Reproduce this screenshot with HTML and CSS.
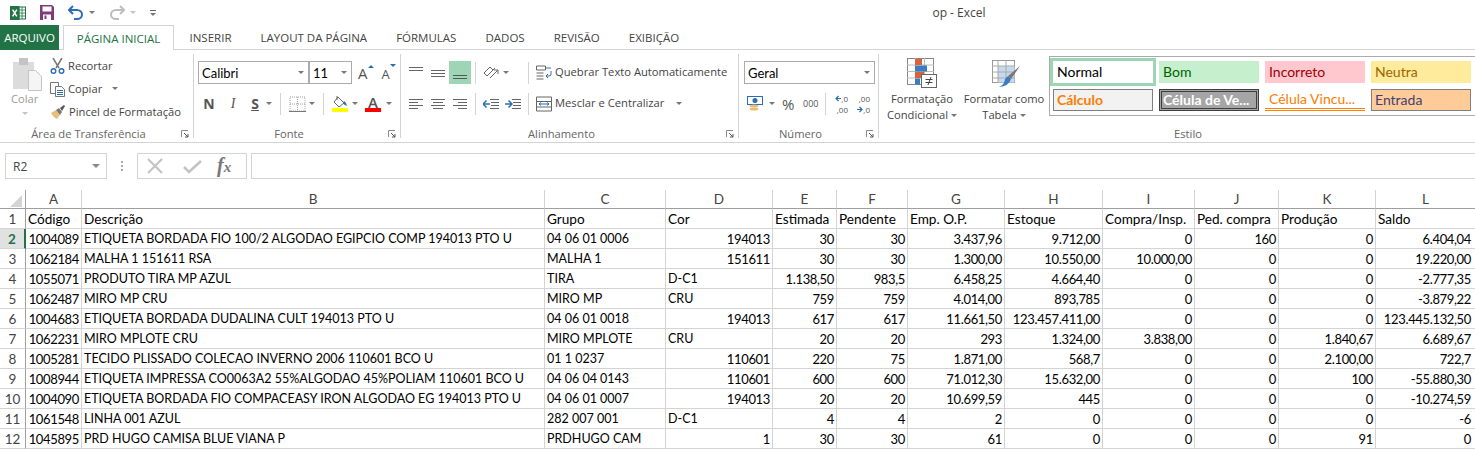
FILE: index.html
```html
<!DOCTYPE html>
<html lang="pt-BR">
<head>
<meta charset="utf-8">
<title>op - Excel</title>
<link rel="stylesheet" href="styles.css">
</head>
<body>
<div class="app">
  <header class="titlebar">
    <div class="qat">
      <svg class="i-excel" width="16" height="16" viewBox="0 0 16 16"><rect x="6" y="2" width="9.5" height="12" fill="#fff" stroke="#217346"/><path d="M9 2v12M12 2v12M6 5h9M6 8h9M6 11h9" stroke="#217346" stroke-width=".8"/><rect y="1" width="9.5" height="14" fill="#217346"/><path d="M2.6 4.6l4.2 6.8M6.8 4.6l-4.2 6.8" stroke="#fff" stroke-width="1.5"/></svg>
      <svg class="i-save" width="14" height="15" viewBox="0 0 14 15"><path d="M0 0h12l2 2v13H0z" fill="#80397b"/><rect x="2.5" y="1.5" width="9" height="5" fill="#fff"/><rect x="3" y="9.5" width="8" height="5.5" fill="#fff"/><rect x="4.5" y="10.5" width="2" height="3.5" fill="#80397b"/></svg>
      <svg class="i-undo" width="16" height="15" viewBox="0 0 16 15"><path d="M5 1L1 5l4 4" fill="none" stroke="#2b6fb3" stroke-width="2"/><path d="M2 5h7a5 4.500 0 0 1 0 9H6" fill="none" stroke="#2b6fb3" stroke-width="2"/></svg>
      <span class="caret c-undo"></span>
      <svg class="i-redo" width="16" height="15" viewBox="0 0 16 15"><path d="M11 1l4 4-4 4" fill="none" stroke="#bdbdbd" stroke-width="2"/><path d="M14 5H7a5 4.500 0 0 0 0 9h3" fill="none" stroke="#bdbdbd" stroke-width="2"/></svg>
      <span class="caret c-redo pale"></span>
      <span class="qat-more"><span class="qat-bar"></span><span class="caret"></span></span>
    </div>
    <div class="doc-title">op - Excel</div>
  </header>

  <nav class="tabs">
    <span class="tab-file">ARQUIVO</span>
    <span class="tab tab-active">PÁGINA INICIAL</span>
    <span class="tab">INSERIR</span>
    <span class="tab">LAYOUT DA PÁGINA</span>
    <span class="tab">FÓRMULAS</span>
    <span class="tab">DADOS</span>
    <span class="tab">REVISÃO</span>
    <span class="tab">EXIBIÇÃO</span>
  </nav>

  <section class="ribbon">
    <div class="group g-clip">
      <div class="group-body clip-body">
        <div class="paste">
          <svg width="29" height="33" viewBox="0 0 29 33"><rect x="0" y="4" width="21" height="27" fill="#dcdcdc"/><rect x="6" y="0" width="9" height="7" fill="#c4c4c4"/><path d="M15.500 12.500h7l6 6v14h-13z" fill="#f5f5f5" stroke="#c4c4c4"/></svg>
          <span class="paste-label">Colar</span>
          <span class="caret pale"></span>
        </div>
        <div class="clip-list">
          <div class="clip-item">
            <svg width="15" height="16" viewBox="0 0 15 16"><path d="M3 0l6 10M12 0L6 10" stroke="#777" stroke-width="1.500"/><circle cx="3.500" cy="13" r="2.300" fill="none" stroke="#2b6fb3" stroke-width="1.400"/><circle cx="11.500" cy="13" r="2.300" fill="none" stroke="#2b6fb3" stroke-width="1.400"/></svg>
            <span>Recortar</span>
          </div>
          <div class="clip-item">
            <svg width="15" height="16" viewBox="0 0 15 16"><path d="M.5 1.500h8v11h-8z" fill="#fff" stroke="#777"/><path d="M5.500 5.500h6l3 3v7h-9z" fill="#fff" stroke="#777"/><path d="M7 9.500h6M7 11.500h6M7 13.500h6" stroke="#2b6fb3"/></svg>
            <span>Copiar</span><span class="caret c-copy"></span>
          </div>
          <div class="clip-item">
            <svg width="16" height="16" viewBox="0 0 16 16"><path d="M1 9l5-3 4 5-3 4q-3-1-6-6z" fill="#e9bf78"/><path d="M6 6l3-2 3 4-2 3z" fill="#777"/><path d="M10 4l4-3 1 1-3 5z" fill="#555"/></svg>
            <span>Pincel de Formatação</span>
          </div>
        </div>
      </div>
      <div class="group-foot"><span class="group-label">Área de Transferência</span><span class="launcher"><svg width="8" height="8" viewBox="0 0 8 8"><path d="M.5 7V.5H7" fill="none" stroke="#8a8a8a"/><path d="M3 3l4 4M7 4v3H4" fill="none" stroke="#555"/></svg></span></div>
    </div>

    <div class="group g-font">
      <div class="group-body rows">
        <div class="row">
          <div class="combo combo-font"><span>Calibri</span><span class="caret"></span></div>
          <div class="combo combo-size"><span>11</span><span class="caret"></span></div>
          <span class="grow-a">A<span class="tri-up"></span></span>
          <span class="shrink-a">A<span class="tri-down"></span></span>
        </div>
        <div class="row row-tools">
          <span class="fmt fmt-n">N</span>
          <span class="fmt fmt-i">I</span>
          <span class="fmt fmt-s">S</span>
          <span class="caret c-s"></span>
          <span class="vsep vs-a"></span>
          <svg class="i-borders" width="17" height="16" viewBox="0 0 17 16"><path d="M1 1h15v14H1zM8.500 1v14M1 8h15" fill="none" stroke="#a0a0a0" stroke-dasharray="1 1"/><path d="M0 15.500h17" stroke="#777"/></svg>
          <span class="caret c-bd"></span>
          <span class="vsep vs-b"></span>
          <span class="fill-ic"><svg width="16" height="12" viewBox="0 0 16 12"><path d="M6 1l6 6-5 4-5-5z" fill="#fff" stroke="#666"/><path d="M5 0v4" stroke="#666"/><path d="M12 5q3 2 3 5-3-1-4-3z" fill="#2b6fb3"/></svg><span class="bar bar-y"></span></span>
          <span class="caret c-fill"></span>
          <span class="color-a"><span class="color-a-l">A</span><span class="bar bar-r"></span></span>
          <span class="caret c-col"></span>
        </div>
      </div>
      <div class="group-foot"><span class="group-label">Fonte</span><span class="launcher"><svg width="8" height="8" viewBox="0 0 8 8"><path d="M.5 7V.5H7" fill="none" stroke="#8a8a8a"/><path d="M3 3l4 4M7 4v3H4" fill="none" stroke="#555"/></svg></span></div>
    </div>

    <div class="group g-align">
      <div class="group-body rows">
        <div class="row">
          <span class="al"><svg width="14" height="14" viewBox="0 0 14 14"><path d="M0 1.500h14M0 4.500h14" stroke="#666"/></svg></span>
          <span class="al"><svg width="14" height="14" viewBox="0 0 14 14"><path d="M0 4.500h14M0 7.500h14M0 10.500h14" stroke="#666"/></svg></span>
          <span class="al al-on"><svg width="14" height="14" viewBox="0 0 14 14"><path d="M0 9.500h14M0 12.500h14" stroke="#555"/></svg></span>
          <span class="vsep vs-c"></span>
          <svg class="i-orient" width="17" height="15" viewBox="0 0 17 15"><path d="M1 8l6-6 3 3-6 6zM4 11l8-8" fill="none" stroke="#666"/><path d="M7 13l8-8M15 5v4M15 5h-4" fill="none" stroke="#666"/></svg>
          <span class="caret c-or"></span>
          <span class="vsep vs-d"></span>
          <span class="wide-btn"><svg width="16" height="16" viewBox="0 0 16 16"><path d="M.5 1h9v4h-9zM.5 8h7M.5 11h7M.5 14h7" fill="none" stroke="#666"/><path d="M10 3h5M15 6v3a2 2 0 0 1-2 2h-3M12 9l-2 2 2 2" fill="none" stroke="#2b6fb3"/></svg><span class="wide-text">Quebrar Texto Automaticamente</span></span>
        </div>
        <div class="row">
          <span class="al"><svg width="14" height="14" viewBox="0 0 14 14"><path d="M0 2.500h14M0 5.500h9M0 8.500h14M0 11.500h9" stroke="#666"/></svg></span>
          <span class="al"><svg width="14" height="14" viewBox="0 0 14 14"><path d="M0 2.500h14M2 5.500h10M0 8.500h14M2 11.500h10" stroke="#666"/></svg></span>
          <span class="al"><svg width="14" height="14" viewBox="0 0 14 14"><path d="M0 2.500h14M5 5.500h9M0 8.500h14M5 11.500h9" stroke="#666"/></svg></span>
          <span class="vsep vs-c"></span>
          <svg class="i-ind" width="16" height="14" viewBox="0 0 16 14"><path d="M7 2.500h9M8 5.500h8M8 8.500h8M7 11.500h9" stroke="#666"/><path d="M0 7h7M3.500 3.500L0 7l3.500 3.500" fill="none" stroke="#2b6fb3" stroke-width="1.500"/></svg>
          <svg class="i-ind2" width="16" height="14" viewBox="0 0 16 14"><path d="M7 2.500h9M8 5.500h8M8 8.500h8M7 11.500h9" stroke="#666"/><path d="M0 7h7M3.500 3.500L7 7l-3.500 3.500" fill="none" stroke="#2b6fb3" stroke-width="1.500"/></svg>
          <span class="vsep vs-e"></span>
          <span class="wide-btn"><svg width="16" height="16" viewBox="0 0 16 16"><path d="M.5 1h15v14H.5zM.5 5.500h15M.5 11h15" fill="none" stroke="#666"/><path d="M3 8h10M5 6.500L3 8l2 1.500M11 6.500L13 8l-2 1.500" fill="none" stroke="#2b6fb3"/></svg><span class="wide-text">Mesclar e Centralizar</span><span class="caret c-merge"></span></span>
        </div>
      </div>
      <div class="group-foot"><span class="group-label">Alinhamento</span><span class="launcher"><svg width="8" height="8" viewBox="0 0 8 8"><path d="M.5 7V.5H7" fill="none" stroke="#8a8a8a"/><path d="M3 3l4 4M7 4v3H4" fill="none" stroke="#555"/></svg></span></div>
    </div>

    <div class="group g-num">
      <div class="group-body rows">
        <div class="row">
          <div class="combo combo-num"><span>Geral</span><span class="caret"></span></div>
        </div>
        <div class="row">
          <svg class="i-cur" width="16" height="16" viewBox="0 0 16 16"><rect x=".5" y=".5" width="15" height="8" fill="#fff" stroke="#2b6fb3"/><circle cx="8" cy="4.500" r="2.500" fill="#2b6fb3"/><ellipse cx="7" cy="10" rx="4.500" ry="1.500" fill="#e9bf78"/><ellipse cx="7" cy="13" rx="4.500" ry="1.500" fill="#e9bf78"/></svg>
          <span class="caret c-cur"></span>
          <span class="pct">%</span>
          <span class="thou">000</span>
          <span class="vsep vs-f"></span>
          <span class="dec"><span class="dec-a"><svg width="6" height="7" viewBox="0 0 6 7"><path d="M6 3.500H1M3.500 1L1 3.500 3.500 6" fill="none" stroke="#2b6fb3" stroke-width="1.200"/></svg>,0</span><span>,00</span></span>
          <span class="dec"><span>,00</span><span class="dec-a"><svg width="6" height="7" viewBox="0 0 6 7"><path d="M0 3.500h5M2.500 1L5 3.500 2.500 6" fill="none" stroke="#2b6fb3" stroke-width="1.200"/></svg>,0</span></span>
        </div>
      </div>
      <div class="group-foot"><span class="group-label">Número</span><span class="launcher"><svg width="8" height="8" viewBox="0 0 8 8"><path d="M.5 7V.5H7" fill="none" stroke="#8a8a8a"/><path d="M3 3l4 4M7 4v3H4" fill="none" stroke="#555"/></svg></span></div>
    </div>

    <div class="group g-style">
      <div class="group-body style-body">
        <div class="big-btn bb-cond">
          <svg width="30" height="30" viewBox="0 0 30 30"><rect x=".5" y=".5" width="26" height="26" fill="#fff" stroke="#888"/><path d="M8.500 0v27M17.500 0v27M0 7h27M0 13.500h27M0 20h27" stroke="#bbb"/><rect x="8" y="1" width="7" height="6" fill="#d9623b"/><rect x="8" y="7.500" width="12" height="6" fill="#3a7cc1"/><rect x="8" y="14" width="9" height="6" fill="#d9623b"/><rect x="8" y="20.500" width="5" height="6" fill="#3a7cc1"/><rect x="14.500" y="16.500" width="15" height="13" fill="#fff" stroke="#666"/><path d="M18.500 21.500h7M18.500 24.500h7M24 19l-3 8" fill="none" stroke="#444"/></svg>
          <span class="bb-text">Formatação</span>
          <span class="bb-text">Condicional<span class="caret c-bb"></span></span>
        </div>
        <div class="big-btn bb-table">
          <svg class="i-fmt-table" width="28" height="28" viewBox="0 0 28 28"><rect x=".5" y=".5" width="22" height="22" fill="#fff" stroke="#999"/><rect x="6" y="6" width="16.500" height="16.500" fill="#c6d9ee"/><path d="M6 0v23M14 0v23M0 6h23M0 12h23M0 18h23" stroke="#aaa"/><path d="M28 6L19 19l-3-3z" fill="#777"/><path d="M16 16l3 3q-2 7-12 8 6-3 6-8z" fill="#3a7cc1"/></svg>
          <span class="bb-text">Formatar como</span>
          <span class="bb-text">Tabela<span class="caret c-bb"></span></span>
        </div>
        <div class="gallery">
          <span class="cell-style st-normal">Normal</span>
          <span class="cell-style st-good">Bom</span>
          <span class="cell-style st-bad">Incorreto</span>
          <span class="cell-style st-neutral">Neutra</span>
          <span class="cell-style st-calc">Cálculo</span>
          <span class="cell-style st-check">Célula de Ve...</span>
          <span class="cell-style st-linked">Célula Vincu...</span>
          <span class="cell-style st-input">Entrada</span>
        </div>
      </div>
      <div class="group-foot foot-style"><span class="group-label">Estilo</span></div>
    </div>
  </section>

  <section class="formula-bar">
    <div class="name-box"><span>R2</span><span class="caret"></span></div>
    <div class="fb-dots"><span></span><span></span><span></span></div>
    <div class="fb-btns">
      <svg width="16" height="16" viewBox="0 0 16 16"><path d="M1 1l14 14M15 1L1 15" stroke="#c4c4c4" stroke-width="2.200"/></svg>
      <svg width="19" height="15" viewBox="0 0 19 15"><path d="M1 8l5 5L18 2" fill="none" stroke="#c4c4c4" stroke-width="2.600"/></svg>
      <span class="fx">f<span class="fx-x">x</span></span>
    </div>
    <div class="fb-input"></div>
  </section>

  <section class="sheet">
    <table class="grid">
      <colgroup>
        <col class="c-h"><col class="c-a"><col class="c-b"><col class="c-c"><col class="c-d"><col class="c-e"><col class="c-f"><col class="c-g"><col class="c-hh"><col class="c-i"><col class="c-j"><col class="c-k"><col class="c-l">
      </colgroup>
      <thead>
        <tr><th class="corner"><span class="corner-tri"></span></th><th>A</th><th>B</th><th>C</th><th>D</th><th>E</th><th>F</th><th>G</th><th>H</th><th>I</th><th>J</th><th>K</th><th>L</th></tr>
      </thead>
      <tbody>
        <tr class="head-row"><th>1</th><td>Código</td><td>Descrição</td><td>Grupo</td><td>Cor</td><td>Estimada</td><td>Pendente</td><td>Emp. O.P.</td><td>Estoque</td><td>Compra/Insp.</td><td>Ped. compra</td><td>Produção</td><td>Saldo</td></tr>
        <tr><th class="sel">2</th><td class="n">1004089</td><td>ETIQUETA BORDADA FIO 100/2 ALGODAO EGIPCIO COMP 194013 PTO U</td><td>04 06 01 0006</td><td class="n">194013</td><td class="n">30</td><td class="n">30</td><td class="n">3.437,96</td><td class="n">9.712,00</td><td class="n">0</td><td class="n">160</td><td class="n">0</td><td class="n">6.404,04</td></tr>
        <tr><th>3</th><td class="n">1062184</td><td>MALHA 1 151611 RSA</td><td>MALHA 1</td><td class="n">151611</td><td class="n">30</td><td class="n">30</td><td class="n">1.300,00</td><td class="n">10.550,00</td><td class="n">10.000,00</td><td class="n">0</td><td class="n">0</td><td class="n">19.220,00</td></tr>
        <tr><th>4</th><td class="n">1055071</td><td>PRODUTO TIRA MP AZUL</td><td>TIRA</td><td>D-C1</td><td class="n">1.138,50</td><td class="n">983,5</td><td class="n">6.458,25</td><td class="n">4.664,40</td><td class="n">0</td><td class="n">0</td><td class="n">0</td><td class="n">-2.777,35</td></tr>
        <tr><th>5</th><td class="n">1062487</td><td>MIRO MP CRU</td><td>MIRO MP</td><td>CRU</td><td class="n">759</td><td class="n">759</td><td class="n">4.014,00</td><td class="n">893,785</td><td class="n">0</td><td class="n">0</td><td class="n">0</td><td class="n">-3.879,22</td></tr>
        <tr><th>6</th><td class="n">1004683</td><td>ETIQUETA BORDADA DUDALINA CULT 194013 PTO U</td><td>04 06 01 0018</td><td class="n">194013</td><td class="n">617</td><td class="n">617</td><td class="n">11.661,50</td><td class="n">123.457.411,00</td><td class="n">0</td><td class="n">0</td><td class="n">0</td><td class="n">123.445.132,50</td></tr>
        <tr><th>7</th><td class="n">1062231</td><td>MIRO MPLOTE CRU</td><td>MIRO MPLOTE</td><td>CRU</td><td class="n">20</td><td class="n">20</td><td class="n">293</td><td class="n">1.324,00</td><td class="n">3.838,00</td><td class="n">0</td><td class="n">1.840,67</td><td class="n">6.689,67</td></tr>
        <tr><th>8</th><td class="n">1005281</td><td>TECIDO PLISSADO COLECAO INVERNO 2006 110601 BCO U</td><td>01 1 0237</td><td class="n">110601</td><td class="n">220</td><td class="n">75</td><td class="n">1.871,00</td><td class="n">568,7</td><td class="n">0</td><td class="n">0</td><td class="n">2.100,00</td><td class="n">722,7</td></tr>
        <tr><th>9</th><td class="n">1008944</td><td>ETIQUETA IMPRESSA CO0063A2 55%ALGODAO 45%POLIAM 110601 BCO U</td><td>04 06 04 0143</td><td class="n">110601</td><td class="n">600</td><td class="n">600</td><td class="n">71.012,30</td><td class="n">15.632,00</td><td class="n">0</td><td class="n">0</td><td class="n">100</td><td class="n">-55.880,30</td></tr>
        <tr><th>10</th><td class="n">1004090</td><td>ETIQUETA BORDADA FIO COMPACEASY IRON ALGODAO EG 194013 PTO U</td><td>04 06 01 0007</td><td class="n">194013</td><td class="n">20</td><td class="n">20</td><td class="n">10.699,59</td><td class="n">445</td><td class="n">0</td><td class="n">0</td><td class="n">0</td><td class="n">-10.274,59</td></tr>
        <tr><th>11</th><td class="n">1061548</td><td>LINHA 001 AZUL</td><td>282 007 001</td><td>D-C1</td><td class="n">4</td><td class="n">4</td><td class="n">2</td><td class="n">0</td><td class="n">0</td><td class="n">0</td><td class="n">0</td><td class="n">-6</td></tr>
        <tr><th>12</th><td class="n">1045895</td><td>PRD HUGO CAMISA BLUE VIANA P</td><td>PRDHUGO CAM</td><td class="n">1</td><td class="n">30</td><td class="n">30</td><td class="n">61</td><td class="n">0</td><td class="n">0</td><td class="n">0</td><td class="n">91</td><td class="n">0</td></tr>
      </tbody>
    </table>
  </section>
</div>
</body>
</html>
```

FILE: styles.css
```css
* { box-sizing: border-box; }
html, body { margin: 0; padding: 0; height: 100%; overflow: hidden; background: #fff; }
body { font-family: "Open Sans", "Liberation Sans", sans-serif; font-size: 11.2px; color: #444; }
svg { display: block; flex: none; }
.app { display: flex; flex-direction: column; width: 1475px; height: 449px; overflow: hidden; }

.caret { display: inline-block; flex: none; width: 0; height: 0; border-left: 3px solid transparent; border-right: 3px solid transparent; border-top: 3px solid #777; }
.caret.pale { border-top-color: #c4c4c4; }

/* Title bar */
.titlebar { height: 25px; display: flex; align-items: center; position: relative; flex: none; }
.qat { display: flex; align-items: center; padding-left: 10px; }
.i-save { margin-left: 14px; }
.i-undo { margin-left: 14px; }
.c-undo { margin-left: 5px; }
.i-redo { margin-left: 14px; }
.c-redo { margin-left: 5px; }
.qat-more { display: flex; flex-direction: column; align-items: center; gap: 2px; margin-left: 14px; }
.qat-bar { width: 6px; height: 1px; background: #666; }
.doc-title { position: absolute; left: 0; right: 0; padding: 0 0 1px 443px; text-align: center; font-size: 12px; color: #444; }

/* Tabs */
.tabs { height: 25px; display: flex; align-items: stretch; border-bottom: 1px solid #d4d4d4; flex: none; font-size: 11.5px; }
.tab-file { width: 59px; background: #217346; color: #fff; display: flex; align-items: center; justify-content: center; margin-bottom: -1px; }
.tab { padding: 0 14.5px; display: flex; align-items: center; color: #444; }
.tab-active { margin-left: 4px; padding: 0 12.5px; width: 111px; justify-content: center; color: #217346; background: #fff; border: 1px solid #d4d4d4; border-bottom: 0; margin-bottom: -1px; margin-right: 1px; }

/* Ribbon */
.ribbon { height: 93px; flex: none; display: flex; padding-top: 4px; align-items: flex-start; border-bottom: 1px solid #d4d4d4; }
.group { height: 84px; display: flex; flex-direction: column; border-right: 1px solid #d4d4d4; }
.group-body { flex: 1; min-height: 0; }
.group-foot { display: flex; height: 13px; line-height: 14px; margin-bottom: -2px; color: #666; }
.group-label { flex: 1; text-align: center; }
.launcher { width: 16px; padding: 3px 0 0 4px; }

.g-clip { width: 194px; }
.g-font { width: 207px; }
.g-align { width: 338px; }
.g-num { width: 140px; }
.g-style { flex: 1; border-right: 0; }

.rows { display: flex; flex-direction: column; gap: 8px; padding-top: 7px; }
.row { display: flex; align-items: center; height: 23px; }

.clip-body { display: flex; padding-left: 11px; }
.paste { width: 30px; margin-left: 2px; padding-top: 4px; display: flex; flex-direction: column; align-items: flex-start; color: #9a9a9a; }
.paste-label { margin: 0 0 0 -2px; line-height: 16px; }
.paste .caret { margin: 5px 0 0 9px; }
.clip-list { display: flex; flex-direction: column; margin-left: 7px; padding-top: 0; }
.clip-item { display: flex; align-items: center; gap: 3px; height: 23px; white-space: nowrap; }
.c-copy { margin-left: 7px; }

.g-font .rows { padding-left: 4px; }
.combo { display: flex; align-items: center; justify-content: space-between; height: 23px; border: 1px solid #ababab; padding: 0 4px 0 3px; font-family: Lato, sans-serif; font-size: 13px; color: #000; background: #fff; }
.combo-font { width: 111px; }
.combo-size { width: 43px; margin-left: 0; border-left-width: 1px; }
.grow-a, .shrink-a { display: inline-flex; align-items: flex-start; font-size: 15px; line-height: 18px; color: #555; }
.grow-a { margin-left: 6px; }
.shrink-a { margin-left: 8px; font-size: 13px; padding-top: 2px; }
.tri-up, .tri-down { width: 0; height: 0; border-left: 3px solid transparent; border-right: 3px solid transparent; }
.tri-up { border-bottom: 3px solid #2b6fb3; margin: 1px 0 0 0; }
.tri-down { border-top: 3px solid #2b6fb3; margin: -1px 0 0 0; }
.row-tools { padding-left: 5px; }
.fmt { width: 12px; text-align: center; font-size: 14px; color: #555; line-height: 18px; }
.fmt-n { font-weight: 700; }
.fmt-i { margin-left: 12px; font-style: italic; font-family: "Liberation Serif", serif; }
.fmt-s { margin-left: 10px; font-weight: 700; text-decoration: underline; }
.c-s { margin-left: 5px; }
.vsep { width: 1px; height: 22px; background: #d4d4d4; flex: none; }
.vs-a { margin-left: 8px; }
.i-borders { margin-left: 8px; }
.c-bd { margin-left: 3px; }
.vs-b { margin-left: 8px; }
.fill-ic { margin-left: 8px; display: flex; flex-direction: column; }
.bar { display: block; height: 4px; width: 16px; }
.bar-y { background: #ffff00; }
.bar-r { background: #ff0000; }
.c-fill { margin-left: 4px; }
.color-a { margin-left: 7px; display: flex; flex-direction: column; align-items: center; }
.color-a-l { font-size: 15px; font-weight: 600; line-height: 12px; color: #555; }
.c-col { margin-left: 5px; }

.g-align .rows { padding-left: 4px; }
.al { width: 22px; height: 23px; display: flex; align-items: center; justify-content: center; }
.al-on { background: #9fd5b7; }
.vs-c { margin-left: 4px; }
.i-orient { margin-left: 7px; }
.c-or { margin-left: 3px; }
.vs-d { margin-left: 19px; }
.wide-btn { display: flex; align-items: center; gap: 3px; margin-left: 7px; white-space: nowrap; }
.wide-text { padding-bottom: 2px; }
.i-ind { margin-left: 7px; }
.i-ind2 { margin-left: 6px; }
.vs-e { margin-left: 7px; }
.c-merge { margin-left: 9px; }

.g-num .rows { padding-left: 5px; }
.combo-num { width: 131px; padding-right: 4px; }
.i-cur { margin-left: 3px; }
.c-cur { margin-left: 6px; }
.pct { margin-left: 7px; font-size: 15px; color: #555; width: 14px; line-height: 18px; }
.thou { margin-left: 7px; font-size: 9px; color: #555; width: 16px; }
.vs-f { margin-left: 6px; }
.dec { margin-left: 7px; width: 15px; display: flex; flex-direction: column; align-items: flex-end; font-size: 8px; line-height: 11px; color: #555; }
.dec-a { display: flex; align-items: center; }

.style-body { display: flex; }
.big-btn { display: flex; flex-direction: column; align-items: center; white-space: nowrap; line-height: 16px; }
.big-btn svg { margin-bottom: 3px; }
.big-btn .i-fmt-table { margin: 2px 0 3px 4px; }
.bb-cond { width: 82px; padding: 4px 0 0 4px; }
.bb-table { width: 86px; padding: 4px 0 0 0; }
.c-bb { margin: 0 0 2px 3px; vertical-align: middle; }
.gallery { width: 426px; height: 60px; margin: 2px 0 0 2px; padding: 4px 0 0 3px; border: 1px solid #ababab; border-right: 0; display: grid; grid-template-columns: repeat(4, 100px); grid-template-rows: repeat(2, 22px); gap: 6px; font-family: Lato, sans-serif; font-size: 14px; }
.cell-style { display: flex; align-items: center; padding: 0 0 1px 4px; white-space: nowrap; overflow: hidden; }
.st-normal { color: #000; outline: 3px solid #9fd5b7; background: #fff; }
.st-good { background: #c6efce; color: #006100; }
.st-bad { background: #ffc7ce; color: #9c0006; }
.st-neutral { background: #ffeb9c; color: #9c6500; }
.st-calc { background: #f2f2f2; color: #fa7d00; font-weight: 700; border: 1px solid #7f7f7f; padding-left: 3px; }
.st-check { background: #a5a5a5; color: #fff; font-weight: 700; border: 3px double #3f3f3f; padding-left: 1px; }
.st-linked { color: #fa7d00; border-bottom: 3px double #ff8001; }
.st-input { background: #ffcc99; color: #3f3f76; border: 1px solid #7f7f7f; padding-left: 3px; }
.foot-style { padding-left: 22px; }

/* Formula bar */
.formula-bar { flex: none; height: 26px; margin-top: 10px; display: flex; align-items: stretch; padding-left: 5px; }
.name-box { width: 102px; border: 1px solid #d4d4d4; display: flex; align-items: center; justify-content: space-between; padding: 0 6px 0 7px; font-size: 12px; color: #444; }
.name-box .caret { border-left-width: 4px; border-right-width: 4px; border-top-width: 4px; border-top-color: #888; }
.fb-dots { width: 30px; display: flex; flex-direction: column; align-items: center; justify-content: center; gap: 2px; }
.fb-dots span { width: 2px; height: 2px; background: #aaa; }
.fb-btns { width: 110px; border: 1px solid #d4d4d4; display: flex; align-items: center; padding-left: 9px; }
.fb-btns svg:nth-child(2) { margin-left: 20px; }
.fx { margin-left: 15px; font-family: "Liberation Serif", serif; font-style: italic; font-weight: 700; font-size: 20px; line-height: 20px; color: #777; }
.fx-x { font-size: 15px; }
.fb-input { flex: 1; margin-left: 4px; border: 1px solid #d4d4d4; border-right: 0; }

/* Sheet */
.sheet { flex: none; margin-top: 11px; }
.grid { table-layout: fixed; width: 1476px; border-collapse: separate; border-spacing: 0; font-family: Lato, sans-serif; font-size: 12.5px; color: #000; }
.c-h { width: 26px; } .c-a { width: 56px; } .c-b { width: 463px; } .c-c { width: 121px; } .c-d { width: 107px; } .c-e { width: 64px; } .c-f { width: 71px; } .c-g { width: 97px; } .c-hh { width: 98px; } .c-i { width: 92px; } .c-j { width: 84px; } .c-k { width: 97px; } .c-l { width: 100px; }
.grid th { font-weight: 400; font-size: 13.5px; color: #444; border-right: 1px solid #d4d4d4; border-bottom: 1px solid #d4d4d4; padding: 0; text-align: center; }
.grid td { height: 20px; line-height: 18px; padding: 1px 2px 0 2px; border-right: 1px solid #d4d4d4; border-bottom: 1px solid #d4d4d4; white-space: nowrap; overflow: hidden; }
.grid td:last-child { padding-right: 4px; }
.grid td.n { text-align: right; font-size: 13px; letter-spacing: -.35px; }
.grid .head-row td { font-size: 13.6px; }
.grid thead th { height: 19px; border-bottom-color: #9f9f9f; line-height: 17px; }
.grid tbody th { height: 20px; padding-top: 1px; line-height: 18px; border-right-color: #9f9f9f; }
.grid thead th.corner { border-right-color: #9f9f9f; }
.corner-tri { display: block; width: 0; height: 0; margin: 3px 0 0 10px; border-left: 12px solid transparent; border-bottom: 12px solid #d4d4d4; }
.grid tbody th.sel { background: #e1e1e1; color: #217346; font-weight: 700; border-right: 2px solid #217346; }
```
